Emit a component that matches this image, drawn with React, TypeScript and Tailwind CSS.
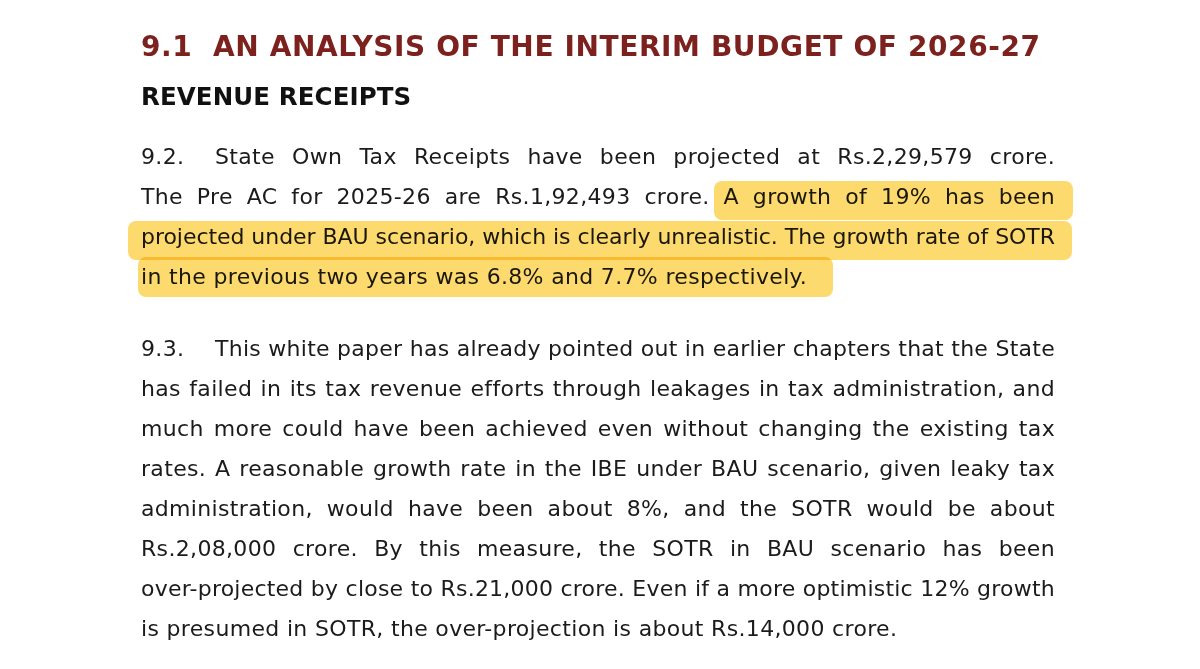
import type { ReactNode } from "react";

const font = { fontFamily: '"DejaVu Sans", Verdana, sans-serif' };

function Line({
  children,
  last = false,
  className = "",
}: {
  children: ReactNode;
  last?: boolean;
  className?: string;
}) {
  return (
    <div
      className={
        (last
          ? "h-[40px] leading-[40px] whitespace-nowrap "
          : "h-[40px] leading-[40px] text-justify [text-align-last:justify] whitespace-nowrap ") +
        className
      }
    >
      {children}
    </div>
  );
}

function Mark({
  children,
  className,
}: {
  children: ReactNode;
  className: string;
}) {
  return (
    <span className="relative">
      <span
        className={
          "pointer-events-none absolute rounded-[8px] bg-[#fcd65e] opacity-90 mix-blend-multiply blur-[0.7px] " +
          className
        }
      />
      {children}
    </span>
  );
}

function Num({ n }: { n: string }) {
  return <span className="inline-block w-[74px] tracking-[0.33px]">{n}</span>;
}

export default function App() {
  return (
    <div
      className="w-[1200px] h-[669px] overflow-hidden bg-white text-[#1b1b1b] pl-[141px]"
      style={font}
    >
      <div className="w-[914px]">
        {/* chapter heading */}
        <h1 className="pt-[29px] text-[28px] leading-[36px] tracking-[0.6px] font-bold text-[#7c211d] whitespace-pre">
          9.1  AN ANALYSIS OF THE INTERIM BUDGET OF 2026-27
        </h1>
        <h2 className="mt-[15px] text-[24.5px] leading-[34px] tracking-[0.1px] font-bold text-[#111]">
          REVENUE RECEIPTS
        </h2>

        {/* para 9.2 */}
        <div className="mt-[23px] text-[22px] tracking-[0.33px]">
          <Line>
            <Num n="9.2." />
            State Own Tax Receipts have been projected at Rs.2,29,579 crore.
          </Line>
          <Line>
            The Pre AC for 2025-26 are Rs.1,92,493 crore.{" "}
            <Mark className="-left-[10px] -right-[18px] top-[-3px] bottom-[-11px]">
              A growth of 19% has been
            </Mark>
          </Line>
          <Line className="tracking-[-0.05px]">
            <Mark className="-left-[13px] -right-[17px] top-[-3px] bottom-[-11px]">
              projected under BAU scenario, which is clearly unrealistic. The growth rate of SOTR
            </Mark>
          </Line>
          <Line last>
            <Mark className="-left-[3px] -right-[26px] top-[-7px] bottom-[-8px]">
              in the previous two years was 6.8% and 7.7% respectively.
            </Mark>
          </Line>
        </div>

        {/* para 9.3 */}
        <div className="mt-[32px] text-[22px] tracking-[0.33px]">
          <Line className="tracking-[0.26px]">
            <Num n="9.3." />
            This white paper has already pointed out in earlier chapters that the State
          </Line>
          <Line>
            has failed in its tax revenue efforts through leakages in tax administration, and
          </Line>
          <Line>
            much more could have been achieved even without changing the existing tax
          </Line>
          <Line>
            rates. A reasonable growth rate in the IBE under BAU scenario, given leaky tax
          </Line>
          <Line>
            administration, would have been about 8%, and the SOTR would be about
          </Line>
          <Line>
            Rs.2,08,000 crore. By this measure, the SOTR in BAU scenario has been
          </Line>
          <Line className="tracking-[0.22px]">
            over-projected by close to Rs.21,000 crore. Even if a more optimistic 12% growth
          </Line>
          <Line last>
            is presumed in SOTR, the over-projection is about Rs.14,000 crore.
          </Line>
        </div>
      </div>
    </div>
  );
}
